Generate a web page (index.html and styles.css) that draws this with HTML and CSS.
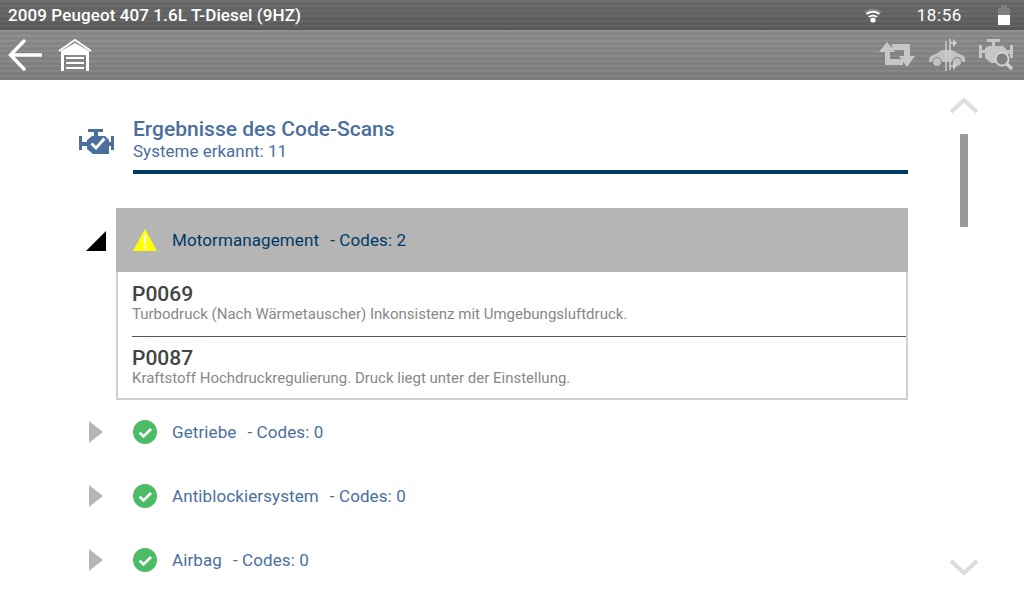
FILE: index.html
```html
<!DOCTYPE html>
<html>
<head>
    <title>Code-Scan</title>
    <meta name="viewport" content="width=device-width, initial-scale=1">
    <link rel="stylesheet" href="styles.css">
</head>
<body>
    <div class="statusbar">
        <span class="vehicle">2009 Peugeot 407 1.6L T-Diesel (9HZ)</span>
        <svg class="wifi" width="18" height="15" viewBox="0 0 18 15">
            <path d="M1 4.500 Q9 -1.500 17 4.500" fill="none" stroke="#858585" stroke-width="2"/>
            <path d="M2.500 6 Q9 1.500 15.500 6" fill="none" stroke="#fff" stroke-width="2"/>
            <path d="M5 9 Q9 6 13 9" fill="none" stroke="#fff" stroke-width="2"/>
            <circle cx="9" cy="12" r="2.600" fill="#fff"/>
        </svg>
        <span class="clock">18:56</span>
        <div class="battery"><div class="battery-cap"></div><div class="battery-body"><div class="battery-fill"></div></div></div>
    </div>

    <div class="toolbar">
        <svg width="34" height="32" viewBox="0 0 34 32">
            <path d="M16 2 L2.500 16 L16 30 M3 16 H33" fill="none" stroke="#fff" stroke-width="3.400" stroke-linecap="round"/>
        </svg>
        <svg class="home" width="34" height="34" viewBox="0 0 34 34">
            <path d="M1 13 L17 2 L33 13" fill="none" stroke="#fff" stroke-width="2"/>
            <path d="M3 33 V13 L17 5 L31 13 V33 H28 V17 H6 V33 Z" fill="#fff"/>
            <path d="M8 20 H26 M8 25 H26 M8 30 H26" stroke="#fff" stroke-width="2"/>
        </svg>
        <div class="toolbar-right">
            <svg width="36" height="26" viewBox="0 0 36 26">
                <path d="M8 0 L16 10 H11 V17 H24 V23 H6 V10 H0 Z" fill="#c6c6c6"/>
                <path d="M28 25 L36 14 H31 V2 H13 V8 H25 V14 H20 Z" fill="#c6c6c6"/>
            </svg>
            <svg width="36" height="34" viewBox="0 0 36 34">
                <path d="M0 21 Q1 17 7 16 L13 12 H23 L30 16 Q36 17 36 21 V24 H0 Z" fill="#c2c2c2"/>
                <circle cx="8" cy="24" r="4.500" fill="#c2c2c2" stroke="#808080"/>
                <circle cx="28" cy="24" r="4.500" fill="#c2c2c2" stroke="#808080"/>
                <path d="M17 3 V33 M21 1 V32" stroke="#cfcfcf" stroke-width="1.500"/>
                <path d="M21 5 H25 M21 28 H25" stroke="#cfcfcf" stroke-width="1.500"/>
                <path d="M24 1 L28 5 L24 9 Z M24 24 L28 28 L24 32 Z" fill="#cfcfcf"/>
            </svg>
            <svg width="34" height="32" viewBox="0 0 34 32">
                <path d="M8 0 H21 V3 H16 V7 H24 L28 11 H31 V6 H34 V19 H31 V15 H28 L24 24 H12 L6 19 V14 H3 V19 H0 V6 H3 V11 H6 V9 L10 7 H13 V3 H8 Z" fill="#c6c6c6"/>
                <circle cx="23" cy="20" r="6.500" fill="#808080" stroke="#d2d2d2" stroke-width="2"/>
                <path d="M28 25 L33 30" stroke="#d2d2d2" stroke-width="3.200"/>
            </svg>
        </div>
    </div>

    <div class="content">
        <div class="scan-head">
            <svg class="engine" width="36" height="27" viewBox="0 0 36 27">
                <path d="M9 1 H24 V4 H19 V8 H26 L30 12 V26 H14 L8 21 V12 L13 8 H15 V4 H9 Z" fill="#4a6f9c"/>
                <path d="M0 8 H3 V14 H8 V18 H3 V22 H0 Z M35 8 H32 V14 H29 V18 H32 V22 H35 Z" fill="#4a6f9c"/>
                <path d="M12.500 15.500 L17 20 L25.500 10.500" fill="none" stroke="#fff" stroke-width="2.800"/>
            </svg>
            <div class="head-text">
                <div class="head-title">Ergebnisse des Code-Scans</div>
                <div class="head-sub">Systeme erkannt: 11</div>
            </div>
        </div>

        <div class="row open">
            <div class="tri-down"></div>
            <div class="row-bar">
                <svg width="24" height="22" viewBox="0 0 24 22">
                    <path d="M12 0 L24 22 H0 Z" fill="#ffff00"/>
                    <path d="M12 6 V15 M12 17 V20" stroke="#fff" stroke-width="2.400"/>
                </svg>
                <span class="row-name">Motormanagement</span>
                <span>- Codes: 2</span>
            </div>
        </div>
        <div class="codes">
            <div class="code">
                <div class="code-id">P0069</div>
                <div class="code-desc">Turbodruck (Nach Wärmetauscher) Inkonsistenz mit Umgebungsluftdruck.</div>
            </div>
            <div class="code">
                <div class="code-id">P0087</div>
                <div class="code-desc">Kraftstoff Hochdruckregulierung. Druck liegt unter der Einstellung.</div>
            </div>
        </div>

        <div class="row">
            <div class="tri-right"></div>
            <div class="row-bar">
                <svg width="24" height="24" viewBox="0 0 24 24"><circle cx="12" cy="12" r="12" fill="#4cbb63"/><path d="M6.500 12.500 L10.500 16.500 L18 9" fill="none" stroke="#fff" stroke-width="2.600"/></svg>
                <span class="row-name">Getriebe</span>
                <span>- Codes: 0</span>
            </div>
        </div>
        <div class="row">
            <div class="tri-right"></div>
            <div class="row-bar">
                <svg width="24" height="24" viewBox="0 0 24 24"><circle cx="12" cy="12" r="12" fill="#4cbb63"/><path d="M6.500 12.500 L10.500 16.500 L18 9" fill="none" stroke="#fff" stroke-width="2.600"/></svg>
                <span class="row-name">Antiblockiersystem</span>
                <span>- Codes: 0</span>
            </div>
        </div>
        <div class="row">
            <div class="tri-right"></div>
            <div class="row-bar">
                <svg width="24" height="24" viewBox="0 0 24 24"><circle cx="12" cy="12" r="12" fill="#4cbb63"/><path d="M6.500 12.500 L10.500 16.500 L18 9" fill="none" stroke="#fff" stroke-width="2.600"/></svg>
                <span class="row-name">Airbag</span>
                <span>- Codes: 0</span>
            </div>
        </div>

        <div class="scroller">
            <svg width="30" height="18" viewBox="0 0 30 18"><path d="M2 15 L15 3 L28 15" fill="none" stroke="#dcdcdc" stroke-width="4"/></svg>
            <div class="scroll-thumb"></div>
            <div class="scroll-space"></div>
            <svg width="30" height="18" viewBox="0 0 30 18"><path d="M2 3 L15 15 L28 3" fill="none" stroke="#dcdcdc" stroke-width="4"/></svg>
        </div>
    </div>
</body>
</html>
```

FILE: styles.css
```css
body {
    margin: 0;
    width: 1024px;
    height: 600px;
    overflow: hidden;
    background: #fff;
    font-family: Roboto, "Liberation Sans", sans-serif;
}
.statusbar {
    height: 30px;
    display: flex;
    align-items: center;
    background:
        repeating-linear-gradient(180deg, rgba(255,255,255,0.03) 0, rgba(255,255,255,0.03) 2px, rgba(0,0,0,0.03) 2px, rgba(0,0,0,0.03) 5px),
        linear-gradient(180deg, #6b6b6b, #5c5c5c);
    color: #fff;
    padding: 0 8px;
    font-size: 17px;
    font-weight: 500;
    letter-spacing: 0.1px;
    box-sizing: border-box;
}
.vehicle {
    flex: 1;
}
.wifi {
    margin-right: 35px;
}
.clock {
    font-weight: 400;
    letter-spacing: 0.6px;
    margin-right: 36px;
}
.battery {
    width: 12px;
    margin-right: 6px;
}
.battery-cap {
    width: 6px;
    height: 3px;
    margin: 0 auto;
    background: #808080;
}
.battery-body {
    height: 17px;
    background: #808080;
    display: flex;
    align-items: flex-end;
}
.battery-fill {
    width: 100%;
    height: 10px;
    background: #fff;
}
.toolbar {
    height: 50px;
    display: flex;
    align-items: center;
    padding: 0 8px;
    box-sizing: border-box;
    background:
        repeating-linear-gradient(180deg, rgba(255,255,255,0.04) 0, rgba(255,255,255,0.04) 2px, rgba(0,0,0,0.03) 2px, rgba(0,0,0,0.03) 5px),
        linear-gradient(180deg, #8c8c8c, #7f7f7f);
}
.home {
    margin-left: 16px;
}
.toolbar-right {
    margin-left: auto;
    display: flex;
    align-items: center;
    gap: 14px;
    margin-right: 3px;
}
.content {
    position: relative;
    padding: 36px 0 0 116px;
    width: 792px;
}
.scan-head {
    position: relative;
    height: 54px;
    margin-left: 17px;
    border-bottom: 4px solid #003a66;
    margin-bottom: 34px;
}
.engine {
    position: absolute;
    left: -54px;
    top: 12px;
}
.head-title {
    font-size: 21px;
    font-weight: 500;
    color: #4a6f9c;
    line-height: 26px;
}
.head-sub {
    font-size: 17px;
    color: #4a6f9c;
    line-height: 19px;
}
.row {
    position: relative;
    height: 64px;
    color: #4a6f9c;
    font-size: 17px;
    letter-spacing: 0.1px;
}
.row.open .row-bar {
    background: #b5b5b5;
    color: #003a66;
}
.row-bar {
    height: 100%;
    display: flex;
    align-items: center;
    padding-left: 17px;
}
.row-bar svg {
    flex: none;
}
.row-name {
    margin-left: 15px;
    margin-right: 11px;
}
.tri-down {
    position: absolute;
    left: -30px;
    top: 23px;
    width: 0;
    height: 0;
    border-style: solid;
    border-width: 0 0 20px 20px;
    border-color: transparent transparent #000 transparent;
}
.tri-right {
    position: absolute;
    left: -27px;
    top: 21px;
    width: 0;
    height: 0;
    border-style: solid;
    border-width: 11px 0 11px 14px;
    border-color: transparent transparent transparent #b5b5b5;
}
.codes {
    border: 2px solid #d0d0d0;
    border-top: 0;
    height: 128px;
    padding-top: 1px;
    box-sizing: border-box;
}
.code {
    height: 64px;
    margin-left: 14px;
    padding-top: 10px;
    box-sizing: border-box;
    border-bottom: 1px solid #555;
}
.code:last-child {
    border-bottom: 0;
}
.code-id {
    font-size: 21px;
    font-weight: 500;
    color: #444;
    line-height: 22px;
}
.code-desc {
    font-size: 15px;
    color: #888;
    line-height: 18px;
    font-variant-ligatures: none;
}
.scroller {
    position: absolute;
    left: 949px;
    top: 17px;
    width: 30px;
    height: 479px;
    display: flex;
    flex-direction: column;
    align-items: center;
}
.scroll-thumb {
    width: 8px;
    height: 93px;
    margin-top: 19px;
    background: #9b999b;
}
.scroll-space {
    flex: 1;
}
```
